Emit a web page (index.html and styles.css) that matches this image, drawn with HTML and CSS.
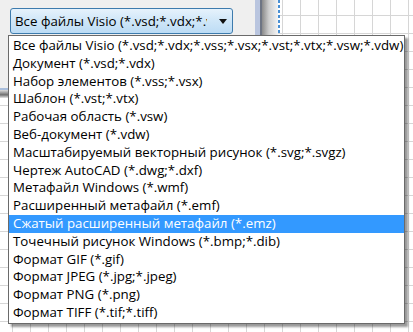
FILE: index.html
```html
<!DOCTYPE html>
<html lang="ru">
<head>
  <meta charset="UTF-8" />
  <meta name="viewport" content="width=device-width, initial-scale=1.0"/>
  <title>Тип файла</title>
  <link rel="stylesheet" href="styles.css">
</head>
<body>

  <div class="dock">
    <div class="panel">
      <div class="combo">
        <span class="combo-text">Все файлы Visio (*.vsd;*.vdx;*.vss;*.vsx;*.vst;*.vtx;*.vsw;*.vdw)</span>
        <span class="combo-arrow"></span>
      </div>
    </div>
    <div class="splitter"></div>
    <div class="page-edge"></div>
  </div>
  <div class="dock-shadow"></div>

  <ul class="dropdown">
    <li>Все файлы Visio (*.vsd;*.vdx;*.vss;*.vsx;*.vst;*.vtx;*.vsw;*.vdw)</li>
    <li>Документ (*.vsd;*.vdx)</li>
    <li>Набор элементов (*.vss;*.vsx)</li>
    <li>Шаблон (*.vst;*.vtx)</li>
    <li>Рабочая область (*.vsw)</li>
    <li>Веб-документ (*.vdw)</li>
    <li>Масштабируемый векторный рисунок (*.svg;*.svgz)</li>
    <li>Чертеж AutoCAD (*.dwg;*.dxf)</li>
    <li>Метафайл Windows (*.wmf)</li>
    <li>Расширенный метафайл (*.emf)</li>
    <li class="selected">Сжатый расширенный метафайл (*.emz)</li>
    <li>Точечный рисунок Windows (*.bmp;*.dib)</li>
    <li>Формат GIF (*.gif)</li>
    <li>Формат JPEG (*.jpg;*.jpeg)</li>
    <li>Формат PNG (*.png)</li>
    <li>Формат TIFF (*.tif;*.tiff)</li>
  </ul>

</body>
</html>
```

FILE: styles.css
```css
html, body {
  margin: 0;
  height: 100%;
}
body {
  width: 413px;
  height: 332px;
  overflow: hidden;
  position: relative;
  font-family: "Open Sans", "Noto Sans", sans-serif;
  font-size: 13.3px;
  color: #000;
  background-color: #fff;
  /* drawing page grid */
  background-image:
    linear-gradient(to right, #d6d6d6 1px, transparent 1px),
    linear-gradient(to bottom, #d6d6d6 1px, transparent 1px);
  background-size: 18px 18px;
  background-position: 12px 15px;
}

/* top docked area */
.dock {
  display: flex;
  height: 90px;
}
.panel {
  width: 255px;
  background-color: #efefef;
  border-bottom: 2px solid #a9bedc;
  box-sizing: border-box;
  padding: 8px 0 0 10px;
}
.combo {
  width: 223px;
  height: 26px;
  box-sizing: border-box;
  border: 1px solid #3d7bad;
  border-radius: 3px;
  background: linear-gradient(#e6f2fc, #cfe6f8 50%, #bcdcf5);
  display: flex;
  align-items: center;
  padding: 0 0 0 4px;
}
.combo-text {
  width: 192px;
  overflow: hidden;
  white-space: nowrap;
}
.combo-arrow {
  margin-left: 12px;
  width: 0;
  height: 0;
  border-left: 4px solid transparent;
  border-right: 4px solid transparent;
  border-top: 5px solid #111;
}
.splitter {
  width: 23px;
  background: linear-gradient(to right, #b9c5df 0, #b9c5df 5px, #6e7584 5px, #6e7584 7px, #8a8a8a 7px, #cfcfcf 14px, #f4f4f4 23px);
}
.page-edge {
  width: 2px;
  background: repeating-linear-gradient(#4a90d4 0, #4a90d4 3px, transparent 3px, transparent 5px);
}
.dock-shadow {
  width: 255px;
  height: 8px;
  background: linear-gradient(#dcdcdc, #6f6f6f 60%, #e6e6e6);
}

/* open combobox list (overlay) */
.dropdown {
  position: absolute;
  left: 8px;
  top: 35px;
  width: 397px;
  box-sizing: border-box;
  margin: 0;
  padding: 1px 0;
  list-style: none;
  background-color: #fff;
  border: 1px solid #6a6a6a;
  box-shadow: 3px 3px 2px rgba(0, 0, 0, 0.4);
}
.dropdown li {
  height: 17.8px;
  line-height: 17.8px;
  padding-left: 4px;
  white-space: nowrap;
}
.dropdown li.selected {
  background-color: #3399ff;
  color: #fff;
}
```
